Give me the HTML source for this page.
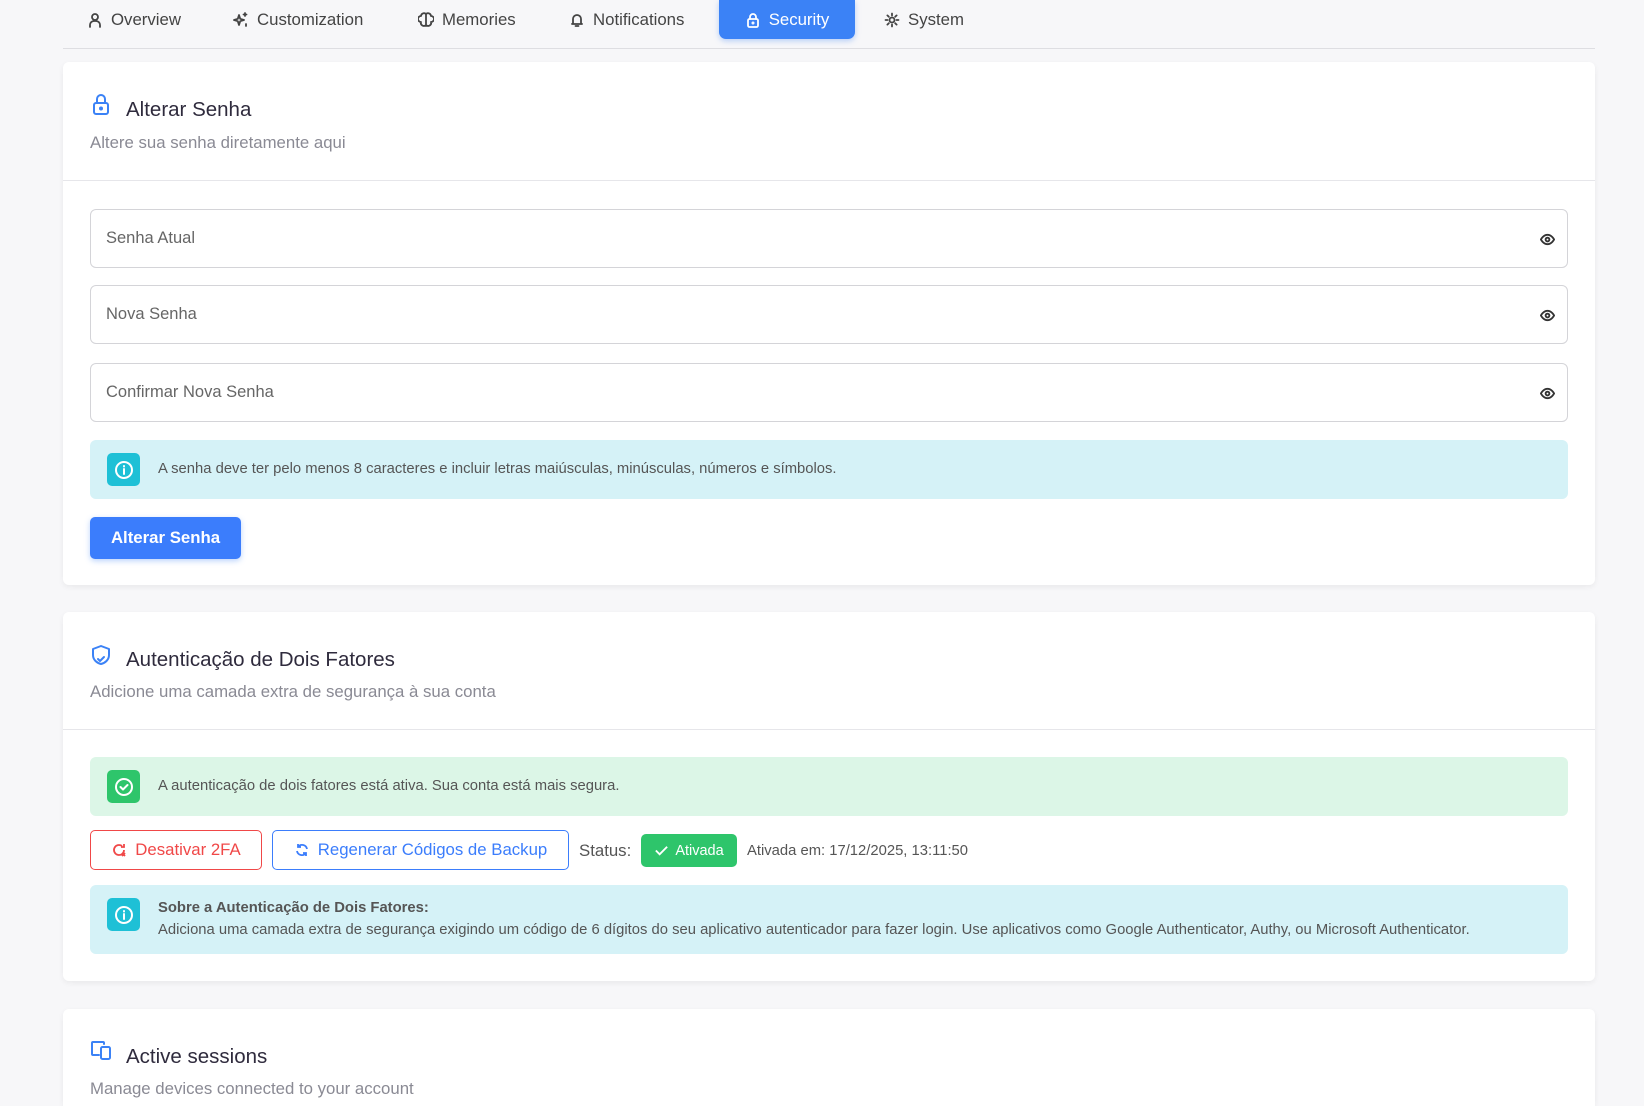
<!DOCTYPE html>
<html style="height:1106px;overflow:hidden"><head><meta charset="utf-8"><style>
*{box-sizing:border-box;margin:0;padding:0}
body{width:1644px;height:1106px;overflow:hidden;background:#f7f7f9;font-family:"Liberation Sans",sans-serif;position:relative;color:#333}
.a{position:absolute}
.tab{position:absolute;top:0;height:39px;display:flex;align-items:center;gap:8px;font-size:16.8px;color:#444}
.tab svg{width:16px;height:16px;fill:none;stroke:currentColor;stroke-width:1.8;stroke-linecap:round;stroke-linejoin:round}
.card{position:absolute;left:63px;width:1532px;background:#fff;border-radius:6px;box-shadow:0 2px 6px rgba(0,0,0,.06)}
.ttl{position:absolute;left:63px;font-size:20.5px;color:#2f2b3d}
.sub{position:absolute;left:27px;font-size:16.8px;color:#8a8a94}
.ico{position:absolute;left:27px;width:22px;height:22px;fill:none;stroke:#3b82f6;stroke-width:2;stroke-linecap:round;stroke-linejoin:round}
.div{position:absolute;left:0;right:0;height:1px;background:#e6e6ea}
.inp{position:absolute;left:27px;width:1478px;height:59px;border:1px solid #d4d4d8;border-radius:6px;font-size:16.5px;color:#666;padding-left:15px;display:flex;align-items:center}
.inp svg{position:absolute;right:12px;top:22px;width:15px;height:15px;fill:none;stroke:#333;stroke-width:2}
.box{position:absolute;left:27px;width:1478px;border-radius:6px;font-size:14.8px;color:#555}
.bi{position:absolute;left:17px;width:33px;height:33px;border-radius:5px;display:flex;align-items:center;justify-content:center}
.bi svg{width:20px;height:20px;fill:none;stroke:#fff;stroke-width:2;stroke-linecap:round;stroke-linejoin:round}
.btn{position:absolute;height:40px;border-radius:5px;display:flex;align-items:center;justify-content:center;gap:8px;font-size:16.8px}
</style></head><body>
<div class="a" style="left:63px;top:48px;width:1532px;height:1px;background:#dedee2"></div>
<div class="tab" style="left:87px"><svg viewBox="0 0 16 16"><circle cx="8" cy="5" r="3"/><path d="M3 15v-2a4 4 0 0 1 4-4h2a4 4 0 0 1 4 4v2"/></svg>Overview</div>
<div class="tab" style="left:233px"><svg viewBox="0 0 16 16"><path d="M6 3l1.2 3.8L11 8l-3.8 1.2L6 13 4.8 9.2 1 8l3.8-1.2z"/><path d="M12 1v3M10.5 2.5h3M13 12v2"/></svg>Customization</div>
<div class="tab" style="left:418px"><svg viewBox="0 0 16 16"><path d="M8 2a3 3 0 0 0-5 2 3 3 0 0 0 0 6 3 3 0 0 0 5 3 3 3 0 0 0 5-3 3 3 0 0 0 0-6 3 3 0 0 0-5-2zM8 2v12"/></svg>Memories</div>
<div class="tab" style="left:569px"><svg viewBox="0 0 16 16"><path d="M4 11V7a4 4 0 0 1 8 0v4l1 1H3zM6.5 14h3"/></svg>Notifications</div>
<div class="tab" style="left:719px;width:136px;background:#3b82f6;color:#fff;border-radius:0 0 7px 7px;justify-content:center;box-shadow:0 2px 6px rgba(59,130,246,.35)"><svg viewBox="0 0 16 16"><rect x="3" y="7" width="10" height="8" rx="1.5"/><path d="M5 7V5a3 3 0 0 1 6 0v2"/><circle cx="8" cy="11" r=".6"/></svg>Security</div>
<div class="tab" style="left:884px"><svg viewBox="0 0 16 16"><circle cx="8" cy="8" r="2.5"/><path d="M8 1.5v2M8 12.5v2M1.5 8h2M12.5 8h2M3.4 3.4l1.4 1.4M11.2 11.2l1.4 1.4M3.4 12.6l1.4-1.4M11.2 4.8l1.4-1.4"/></svg>System</div>

<div class="card" style="top:62px;height:523px">
<svg class="ico" style="top:31px" viewBox="0 0 22 22"><rect x="4" y="10" width="14" height="11" rx="2"/><path d="M7 10V6a4 4 0 0 1 8 0v4"/><circle cx="11" cy="15.5" r="1" fill="#3b82f6"/></svg>
<div class="ttl" style="top:36px">Alterar Senha</div>
<div class="sub" style="top:71px">Altere sua senha diretamente aqui</div>
<div class="div" style="top:118px"></div>
<div class="inp" style="top:147px">Senha Atual<svg viewBox="0 0 16 16"><path d="M1 8s2.5-5 7-5 7 5 7 5-2.5 5-7 5-7-5-7-5z"/><circle cx="8" cy="8" r="2"/></svg></div>
<div class="inp" style="top:223px">Nova Senha<svg viewBox="0 0 16 16"><path d="M1 8s2.5-5 7-5 7 5 7 5-2.5 5-7 5-7-5-7-5z"/><circle cx="8" cy="8" r="2"/></svg></div>
<div class="inp" style="top:301px">Confirmar Nova Senha<svg viewBox="0 0 16 16"><path d="M1 8s2.5-5 7-5 7 5 7 5-2.5 5-7 5-7-5-7-5z"/><circle cx="8" cy="8" r="2"/></svg></div>
<div class="box" style="top:378px;height:59px;background:#d5f2f7">
<div class="bi" style="top:13px;background:#1ec0d6"><svg viewBox="0 0 20 20"><circle cx="10" cy="10" r="8"/><path d="M10 9v5M10 6v.5"/></svg></div>
<div class="a" style="left:68px;top:21px">A senha deve ter pelo menos 8 caracteres e incluir letras maiúsculas, minúsculas, números e símbolos.</div></div>
<div class="btn" style="left:27px;top:455px;width:151px;height:42px;background:#3b7dfc;color:#fff;font-weight:bold;box-shadow:0 2px 6px rgba(59,130,246,.35)">Alterar Senha</div>
</div>

<div class="card" style="top:612px;height:369px">
<svg class="ico" style="top:32px" viewBox="0 0 22 22"><path d="M11 2l8 3v6c0 5-4 8-8 9-4-1-8-4-8-9V5z"/><path d="M8 15l2 2 4-4"/></svg>
<div class="ttl" style="top:36px">Autenticação de Dois Fatores</div>
<div class="sub" style="top:70px">Adicione uma camada extra de segurança à sua conta</div>
<div class="div" style="top:117px"></div>
<div class="box" style="top:145px;height:59px;background:#dcf6e7">
<div class="bi" style="top:13px;background:#2ec56b"><svg viewBox="0 0 20 20"><circle cx="10" cy="10" r="8"/><path d="M6.5 10l2.5 2.5 4.5-4.5"/></svg></div>
<div class="a" style="left:68px;top:21px">A autenticação de dois fatores está ativa. Sua conta está mais segura.</div></div>
<div class="btn" style="left:27px;top:218px;width:172px;border:1px solid #f04848;color:#f04848"><svg width="16" height="16" viewBox="0 0 16 16" fill="none" stroke="#f04848" stroke-width="1.8"><path d="M13 8a5 5 0 1 1-2-4M13 2v3h-3M11 11l3 3M14 11l-3 3"/></svg>Desativar 2FA</div>
<div class="btn" style="left:209px;top:218px;width:297px;border:1px solid #3b7dfc;color:#3b7dfc"><svg width="16" height="16" viewBox="0 0 16 16" fill="none" stroke="#3b7dfc" stroke-width="1.8"><path d="M13 7a5 5 0 0 0-9-2M3 9a5 5 0 0 0 9 2M4 2v3h3M12 14v-3h-3"/></svg>Regenerar Códigos de Backup</div>
<div class="a" style="left:516px;top:229px;font-size:16.8px;color:#555">Status:</div>
<div class="btn" style="left:578px;top:222px;width:96px;height:33px;background:#2ec56b;color:#fff;font-size:14.5px;gap:6px"><svg width="15" height="15" viewBox="0 0 16 16" fill="none" stroke="#fff" stroke-width="2"><path d="M2 8l4 4 8-8"/></svg>Ativada</div>
<div class="a" style="left:684px;top:231px;font-size:14.8px;color:#555">Ativada em: 17/12/2025, 13:11:50</div>
<div class="box" style="top:273px;height:69px;background:#d5f2f7">
<div class="bi" style="top:13px;background:#1ec0d6"><svg viewBox="0 0 20 20"><circle cx="10" cy="10" r="8"/><path d="M10 9v5M10 6v.5"/></svg></div>
<div class="a" style="left:68px;top:15px;font-weight:bold">Sobre a Autenticação de Dois Fatores:</div>
<div class="a" style="left:68px;top:37px;white-space:nowrap">Adiciona uma camada extra de segurança exigindo um código de 6 dígitos do seu aplicativo autenticador para fazer login. Use aplicativos como Google Authenticator, Authy, ou Microsoft Authenticator.</div></div>
</div>

<div class="card" style="top:1009px;height:97px;border-radius:6px 6px 0 0">
<svg class="ico" style="top:30px" viewBox="0 0 22 22"><path d="M14 5V4a1 1 0 0 0-1-1H3a1 1 0 0 0-1 1v11a1 1 0 0 0 1 1h6"/><rect x="11" y="8" width="9" height="12" rx="1.5"/></svg>
<div class="ttl" style="top:36px">Active sessions</div>
<div class="sub" style="top:70px">Manage devices connected to your account</div>
</div>
</body></html>
